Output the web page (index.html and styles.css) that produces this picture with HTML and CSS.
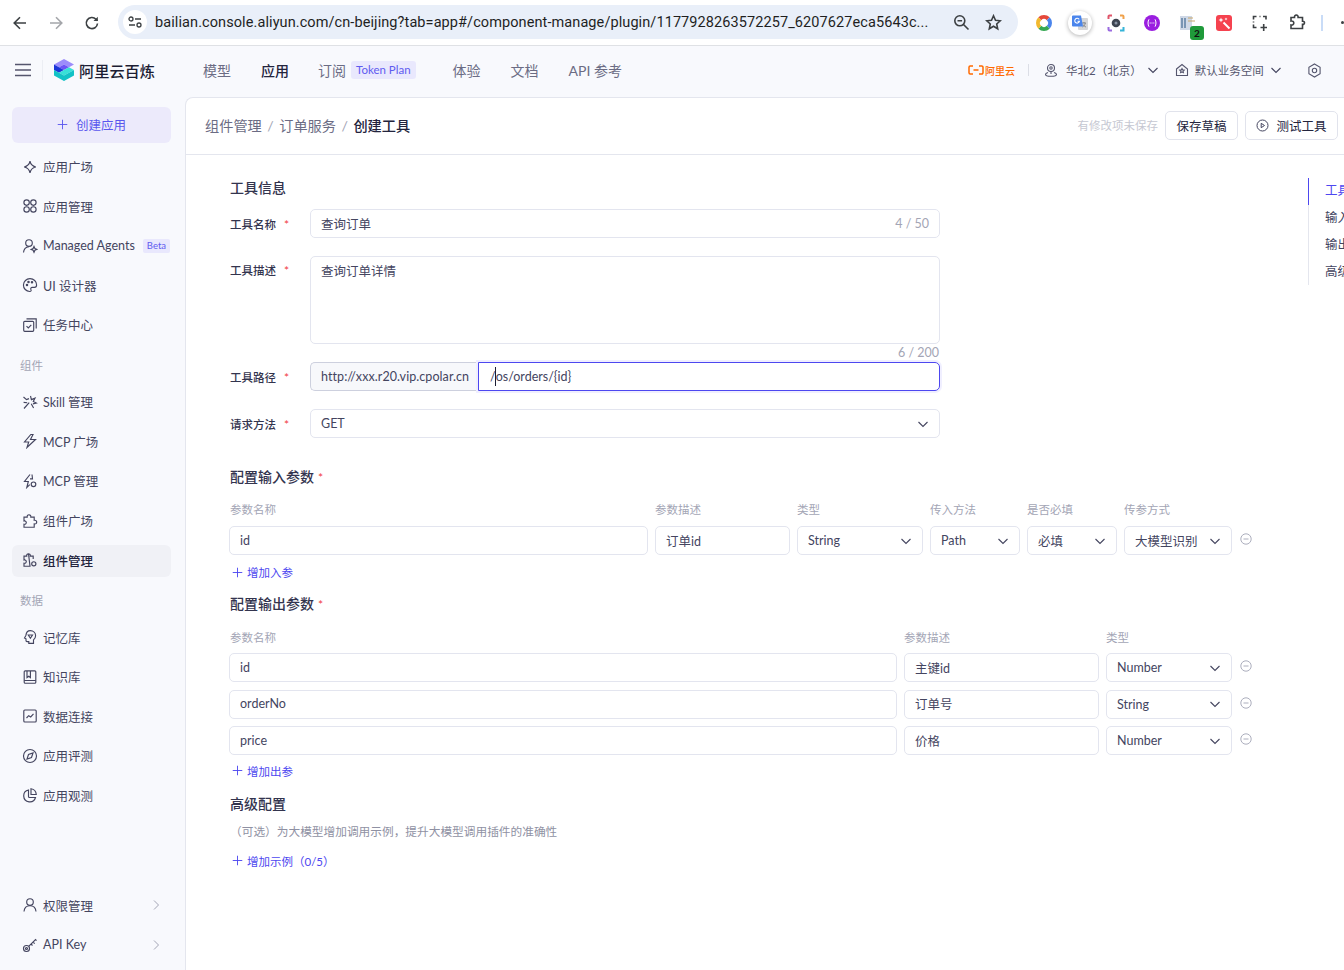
FILE: index.html

```html
<!DOCTYPE html>
<html lang="zh-CN">
<head>
  <meta charset="UTF-8">
  <meta name="viewport" content="width=device-width, initial-scale=1.0">
  <title>创建工具 - 阿里云百炼</title>
  <link rel="stylesheet" href="styles.css">
</head>
<body>
  <svg class="sprite" xmlns="http://www.w3.org/2000/svg">
    <symbol id="i-chev" viewBox="0 0 12 12"><path d="M1.5 4l4.5 4.5L10.5 4"/></symbol>
    <symbol id="i-right" viewBox="0 0 12 12"><path d="M4 1.5L8.5 6 4 10.500"/></symbol>
    <symbol id="i-minus" viewBox="0 0 12 12"><circle cx="6" cy="6" r="5.2"/><path d="M3.500 6h5"/></symbol>
    <symbol id="i-plus" viewBox="0 0 12 12"><path d="M6 .8v10.400M.8 6h10.400"/></symbol>
    <symbol id="i-spark" viewBox="0 0 16 16"><path d="M8 2.200c.6 3.200 2.400 5 5.800 5.800-3.400.8-5.200 2.600-5.800 5.800C7.400 10.600 5.600 8.800 2.200 8 5.600 7.200 7.400 5.400 8 2.200z"/></symbol>
    <symbol id="i-apps" viewBox="0 0 16 16"><circle cx="4.600" cy="4.600" r="2.700"/><circle cx="11.400" cy="4.600" r="2.700"/><circle cx="4.600" cy="11.400" r="2.700"/><circle cx="11.400" cy="11.400" r="2.700"/></symbol>
    <symbol id="i-agent" viewBox="0 0 16 16"><circle cx="7" cy="5" r="3.300"/><path d="M1.500 14.500c.3-3.300 2.300-5.500 5.500-5.800"/><path d="M12 8.500l.9 2 2 .9-2 .9-.9 2-.9-2-2-.9 2-.9z"/></symbol>
    <symbol id="i-palette" viewBox="0 0 16 16"><path d="M8 1.700a6.400 6.400 0 1 0-.3 12.800c1.500 0 1.700-1 1.200-2-.5-1.100.1-2.200 1.400-2.200h2.200c1.300 0 2.100-.9 2.100-2.300C14.600 4.300 11.700 1.700 8 1.700z"/><circle cx="5" cy="8" r=".7"/><circle cx="6.500" cy="5" r=".7"/><circle cx="10" cy="5.200" r=".7"/></symbol>
    <symbol id="i-task" viewBox="0 0 16 16"><rect x="1.700" y="4.300" width="10" height="10" rx="1"/><path d="M4.500 1.800h9.700v9.700"/><path d="M4.500 9.200l1.800 1.800 3-3.200"/></symbol>
    <symbol id="i-skill" viewBox="0 0 16 16"><path d="M8.500 2l.9 3.600 3.600-1.500-1.700 3.400 3 1.500-3.400.9"/><path d="M1.500 3l3 2.600L7 4.600M1.600 8.400l3.600.4M9.200 9.800l2.400 4.200M7.200 8.600L2 14.500"/></symbol>
    <symbol id="i-bolt" viewBox="0 0 16 16"><path d="M8.800 1.500L2.500 9h4.200L5 14.500 13.500 6.500H8.500l2.500-5z"/></symbol>
    <symbol id="i-boltgear" viewBox="0 0 16 16"><path d="M8 1.500L2.500 8.500h3.800L4.800 14.500l3-2.800M8 5.800h2.500L10 1.500"/><circle cx="11.500" cy="11.300" r="2.300"/></symbol>
    <symbol id="i-puzzle" viewBox="0 0 16 16"><path d="M7 1.800c1.300 0 2 .9 1.800 2.300h3.400v3.200c1.500-.3 2.500.5 2.500 1.800s-1 2.100-2.500 1.800v3.300H2v-3c1.500.3 2.400-.7 2.300-1.800C4.200 8.300 3.100 7.700 2 8V4.100h3.200C5 2.700 5.700 1.800 7 1.800z"/></symbol>
    <symbol id="i-puzzlegear" viewBox="0 0 16 16"><path d="M6.500 1.800c1.300 0 2 .9 1.800 2.300h2.900v3M8 14.200H2v-3c1.500.3 2.400-.7 2.300-1.800C4.200 8.300 3.100 7.700 2 8V4.100h2.700c-.2-1.400.5-2.300 1.800-2.300z"/><circle cx="11.800" cy="11.800" r="2.100"/></symbol>
    <symbol id="i-memory" viewBox="0 0 16 16"><path d="M8.300 1.600c3 0 5.300 2.200 5.300 5.100 0 1.900-1 3.200-2.100 4.200v3.500H6.800v-1.800H5c-.7 0-1-.4-1-1V9.800L2.500 9l1.400-2.600c.3-2.800 1.800-4.800 4.400-4.800z"/><path d="M6.300 6h4.200l-2.100 3.300z"/></symbol>
    <symbol id="i-book" viewBox="0 0 16 16"><rect x="2.200" y="1.800" width="11.600" height="12.400" rx="1"/><path d="M5 2v6.500l1.700-1.300 1.700 1.300V2M2.200 11.500h11.600"/></symbol>
    <symbol id="i-chart" viewBox="0 0 16 16"><rect x="1.800" y="2" width="12.400" height="12" rx="1"/><path d="M4.500 10l2.200-2.300 2 1.200 2.800-3"/></symbol>
    <symbol id="i-compass" viewBox="0 0 16 16"><circle cx="8" cy="8" r="6.500"/><path d="M11 5L9.500 9.500 5 11l1.500-4.500z"/></symbol>
    <symbol id="i-pie" viewBox="0 0 16 16"><path d="M6.500 3a6 6 0 1 0 7 7.500H7.500A1 1 0 0 1 6.500 9.500z"/><path d="M9 1.700c2.900.4 5 2.500 5.300 5.800H9z"/></symbol>
    <symbol id="i-user" viewBox="0 0 16 16"><circle cx="8" cy="5" r="3.300"/><path d="M2 14.500c.3-3.500 2.600-5.800 6-5.800s5.700 2.300 6 5.800"/></symbol>
    <symbol id="i-key" viewBox="0 0 16 16"><circle cx="4.500" cy="11.500" r="3"/><circle cx="4.500" cy="11.500" r="1"/><path d="M6.700 9.400L13.500 2.500l1 1.200M11 5l1.700 1.700M9 7l1.500 1.500"/></symbol>
  </svg>

  <header class="browser-bar">
    <button class="bar-btn">
      <svg width="16" height="16" viewBox="0 0 16 16"><path d="M14 8H2.500M8 2.200L2.200 8 8 13.800"/></svg>
    </button>
    <button class="bar-btn bar-btn-off">
      <svg width="16" height="16" viewBox="0 0 16 16"><path d="M2 8h11.500M8 2.200L13.800 8 8 13.800"/></svg>
    </button>
    <button class="bar-btn">
      <svg width="16" height="16" viewBox="0 0 16 16"><path d="M13.500 8.500a5.600 5.600 0 1 1-1.500-4.300l1.500 1.600"/><path d="M13.800 1.800v4.300H9.500" class="filled"/></svg>
    </button>
    <div class="omnibox">
      <span class="site-info">
        <svg width="14" height="12" viewBox="0 0 14 12"><circle cx="3" cy="3" r="2"/><path d="M7 3h6M1 9h6"/><circle cx="11" cy="9" r="2"/></svg>
      </span>
      <span class="url">bailian.console.aliyun.com/cn-beijing?tab=app#/component-manage/plugin/1177928263572257_6207627eca5643c...</span>
      <svg class="omni-icon" width="17" height="17" viewBox="0 0 17 17"><circle cx="6.800" cy="6.800" r="5"/><path d="M10.500 10.500L15.500 15.500M4.500 6.800h4.600"/></svg>
      <svg class="omni-icon" width="17" height="17" viewBox="0 0 17 17"><path d="M8.500 1.800l2 4.500 4.800.5-3.600 3.200 1 4.800-4.200-2.500-4.200 2.500 1-4.800L1.700 6.800l4.800-.5z"/></svg>
    </div>
    <div class="extensions">
      <span class="ext">
        <svg class="ring" width="18" height="18" viewBox="0 0 18 18">
          <path class="ring-r" d="M4.760 4.760A6 6 0 0 1 13.240 4.760"/>
          <path class="ring-b" d="M13.240 4.760A6 6 0 0 1 13.240 13.240"/>
          <path class="ring-g" d="M13.240 13.240A6 6 0 0 1 4.760 13.240"/>
          <path class="ring-y" d="M4.760 13.240A6 6 0 0 1 4.760 4.760"/>
        </svg>
      </span>
      <span class="ext">
        <span class="ext-halo">
          <svg width="18" height="18" viewBox="0 0 18 18"><rect x="7" y="4" width="10" height="12" rx="1" fill="#d5d6d8"/><path d="M11 9h4M13 8v1M11.500 13c1.800-1 2.500-2.300 2.800-4M12 10.500c.6 1 1.500 2 3 2.500" fill="none" stroke="#77797e" stroke-width=".8"/><path d="M1 2.500a1 1 0 0 1 1-1h8l2 11H2a1 1 0 0 1-1-1z" fill="#4a85ec"/><path d="M8.200 5.400A2.400 2.400 0 1 0 8.500 7.200H6.500" fill="none" stroke="#fff" stroke-width="1.100"/></svg>
        </span>
      </span>
      <span class="ext">
        <svg width="18" height="18" viewBox="0 0 18 18"><path d="M1.500 5V2.500a1 1 0 0 1 1-1H5" class="c-red"/><path d="M13 1.500h2.500a1 1 0 0 1 1 1V5" class="c-orange"/><path d="M1.500 13v2.500a1 1 0 0 0 1 1H5" class="c-purple"/><path d="M13 16.500h3.500V13" class="c-cyan"/><circle cx="9" cy="9" r="4.300" fill="#3d4450"/><circle cx="9" cy="9" r="1.500" fill="#8a93a3"/></svg>
      </span>
      <span class="ext">
        <svg width="16" height="16" viewBox="0 0 16 16"><circle cx="8" cy="8" r="8" fill="#9a1ee0"/><path d="M5 4.300C3.700 6.200 3.700 9.800 5 11.700M11 4.300c1.300 1.900 1.300 5.500 0 7.400" fill="none" stroke="#fff" stroke-width="1"/><path d="M5.700 8h1M7.500 8h1M9.300 8h1" stroke="#fff" stroke-width="1"/></svg>
      </span>
      <span class="ext">
        <svg width="18" height="18" viewBox="0 0 18 18"><rect x="1" y="2" width="12" height="14" fill="#cfd8e6"/><path d="M3 4v10M6 4v10" stroke="#55799e" stroke-width="1.400"/><path d="M9 4h5M9 7h7" stroke="#c9a86a" stroke-width="1.200"/></svg>
        <span class="ext-badge">2</span>
      </span>
      <span class="ext">
        <svg width="16" height="16" viewBox="0 0 16 16"><rect width="16" height="16" rx="3" fill="#f5424f"/><path d="M7.500 7.500l6 6" stroke="#fff" stroke-width="2"/><path d="M5 2.500l.7 1.800 1.800.7-1.800.7L5 7.500l-.7-1.800L2.500 5l1.800-.7zM10 2.500l.5 1 1 .5-1 .5-.5 1-.5-1-1-.5 1-.5z" fill="#fff"/></svg>
      </span>
      <span class="ext">
        <svg class="ext-line" width="16" height="16" viewBox="0 0 16 16"><path d="M4.500 1.500h-3v3M11 1.500h3v3M1.500 9.500v3h3M7.500 1.500h1M1.500 6.500v1M8.500 12.500h6.500M11.700 9v7"/></svg>
      </span>
      <span class="ext ext-wide">
        <svg class="ext-line" width="17" height="17" viewBox="0 0 17 17"><path d="M2 3.500h3.500c-.2-1.500.6-2.500 1.800-2.500s2 1 1.800 2.500h4.400v3.700c1.200-.1 2 .6 2 1.600s-.8 1.700-2 1.600v4.100H2v-3.500c1.700.3 2.800-.6 2.800-2s-1.100-2.300-2.800-2z"/></svg>
      </span>
      <span class="bar-divider"></span>
      <span class="bar-menu"></span>
    </div>
  </header>

  <nav class="top-nav">
    <button class="hamburger">
      <svg width="16" height="14" viewBox="0 0 16 14"><path d="M0 1.500h16M0 7h16M0 12.500h16"/></svg>
    </button>
    <span class="nav-sep"></span>
    <a class="logo">
      <svg width="22" height="22" viewBox="0 0 22 22">
        <path d="M11 0l10 5.500-5 2.800-5-2.800-5 2.800-5-2.800z" fill="#9c8cfb"/>
        <path d="M11 5.500l5 2.800-5 2.700-5-2.700z" fill="#6e54f5"/>
        <path d="M1 5.500l5 2.800 5 2.700-5 2.800-5-2.800z" fill="#1a35d8"/>
        <path d="M6 13.800l10-5.500 5 2.700-10 5.500z" fill="#38e0d8"/>
        <path d="M1 11l10 5.500L21 11v5.500L11 22 1 16.500z" fill="#12c2c6"/>
      </svg>
      <span class="logo-text">阿里云百炼</span>
    </a>
    <ul class="nav-links">
      <li>模型</li>
      <li class="nav-active">应用</li>
      <li class="nav-sub">订阅<span class="token-tag">Token Plan</span></li>
      <li>体验</li>
      <li>文档</li>
      <li>API 参考</li>
    </ul>
    <div class="nav-right">
      <span class="aliyun">
        <svg width="16" height="10" viewBox="0 0 16 10"><path d="M5 1H2.200A1.200 1.200 0 0 0 1 2.200v5.600A1.200 1.200 0 0 0 2.200 9H5M11 1h2.800A1.200 1.200 0 0 1 15 2.200v5.600A1.200 1.200 0 0 1 13.800 9H11M5.500 5h5"/></svg>
        阿里云
      </span>
      <span class="right-sep"></span>
      <span class="nav-drop region">
        <svg class="ico" width="14" height="14" viewBox="0 0 14 14"><circle cx="7" cy="5" r="3.500"/><circle cx="7" cy="5" r="1.200"/><path d="M4 9.500c-1.500.4-2.500 1.100-2.500 2 0 1 2.300 1.800 5.500 1.800s5.500-.8 5.500-1.800c0-.9-1-1.600-2.500-2M7 8.500v2.500"/></svg>
        <span>华北2（北京）</span>
        <svg class="chev" width="12" height="12"><use href="#i-chev"/></svg>
      </span>
      <span class="nav-drop workspace">
        <svg class="ico" width="14" height="14" viewBox="0 0 14 14"><path d="M1.500 6L7 1.500 12.500 6v6.500h-11z"/><path d="M7 5.500l.7 1.400 1.500.2-1.100 1 .3 1.500L7 9l-1.400.6.300-1.500-1.100-1 1.500-.2z"/></svg>
        <span>默认业务空间</span>
        <svg class="chev" width="12" height="12"><use href="#i-chev"/></svg>
      </span>
      <svg class="gear" width="15" height="15" viewBox="0 0 15 15"><path d="M7.500 1l5.600 3.200v6.600L7.500 14l-5.600-3.200V4.200z"/><circle cx="7.500" cy="7.500" r="2.200"/></svg>
    </div>
  </nav>

  <div class="layout">
    <aside class="sidebar">
      <button class="create-btn"><svg class="plus" width="11" height="11"><use href="#i-plus"/></svg>创建应用</button>
      <a class="side-item"><svg class="side-ico"><use href="#i-spark"/></svg>应用广场</a>
      <a class="side-item"><svg class="side-ico"><use href="#i-apps"/></svg>应用管理</a>
      <a class="side-item"><svg class="side-ico"><use href="#i-agent"/></svg>Managed Agents<span class="beta">Beta</span></a>
      <a class="side-item"><svg class="side-ico"><use href="#i-palette"/></svg>UI 设计器</a>
      <a class="side-item"><svg class="side-ico"><use href="#i-task"/></svg>任务中心</a>
      <div class="side-group">组件</div>
      <a class="side-item"><svg class="side-ico"><use href="#i-skill"/></svg>Skill 管理</a>
      <a class="side-item"><svg class="side-ico"><use href="#i-bolt"/></svg>MCP 广场</a>
      <a class="side-item"><svg class="side-ico"><use href="#i-boltgear"/></svg>MCP 管理</a>
      <a class="side-item"><svg class="side-ico"><use href="#i-puzzle"/></svg>组件广场</a>
      <a class="side-item side-active"><svg class="side-ico"><use href="#i-puzzlegear"/></svg>组件管理</a>
      <div class="side-group">数据</div>
      <a class="side-item"><svg class="side-ico"><use href="#i-memory"/></svg>记忆库</a>
      <a class="side-item"><svg class="side-ico"><use href="#i-book"/></svg>知识库</a>
      <a class="side-item"><svg class="side-ico"><use href="#i-chart"/></svg>数据连接</a>
      <a class="side-item"><svg class="side-ico"><use href="#i-compass"/></svg>应用评测</a>
      <a class="side-item"><svg class="side-ico"><use href="#i-pie"/></svg>应用观测</a>
      <a class="side-item side-bottom"><svg class="side-ico"><use href="#i-user"/></svg>权限管理<svg class="side-arrow" width="12" height="12"><use href="#i-right"/></svg></a>
      <a class="side-item"><svg class="side-ico"><use href="#i-key"/></svg>API Key<svg class="side-arrow" width="12" height="12"><use href="#i-right"/></svg></a>
    </aside>

    <main class="page">
      <div class="page-head">
        <div class="crumbs">
          <span>组件管理</span><i>/</i><span>订单服务</span><i>/</i><b>创建工具</b>
        </div>
        <div class="head-actions">
          <span class="unsaved">有修改项未保存</span>
          <button class="btn">保存草稿</button>
          <button class="btn">
            <svg width="13" height="13" viewBox="0 0 13 13"><circle cx="6.500" cy="6.500" r="5.500"/><path d="M5.200 4.300l3.300 2.200-3.300 2.200z"/></svg>
            测试工具
          </button>
        </div>
      </div>

      <div class="content">
        <div class="form-col">
          <h3 class="sec-title first">工具信息</h3>

          <div class="field">
            <label>工具名称<em>*</em></label>
            <div class="input grow">查询订单<span class="count">4 / 50</span></div>
          </div>
          <div class="field field-area">
            <label>工具描述<em>*</em></label>
            <div class="input grow area">查询订单详情</div>
          </div>
          <div class="area-count">6 / 200</div>
          <div class="field">
            <label>工具路径<em>*</em></label>
            <div class="path-group grow">
              <span class="path-host">http://xxx.r20.vip.cpolar.cn</span>
              <span class="path-input">/<span class="caret"></span>os/orders/{id}</span>
            </div>
          </div>
          <div class="field next">
            <label>请求方法<em>*</em></label>
            <div class="input grow select">GET<svg class="chev" width="12" height="12"><use href="#i-chev"/></svg></div>
          </div>

          <h3 class="sec-title input-sec">配置输入参数<em>*</em></h3>
          <div class="param-grid in-grid heads">
            <span>参数名称</span><span>参数描述</span><span>类型</span><span>传入方法</span><span>是否必填</span><span>传参方式</span>
          </div>
          <div class="param-grid in-grid">
            <div class="input">id</div>
            <div class="input">订单id</div>
            <div class="input select">String<svg class="chev" width="12" height="12"><use href="#i-chev"/></svg></div>
            <div class="input select">Path<svg class="chev" width="12" height="12"><use href="#i-chev"/></svg></div>
            <div class="input select">必填<svg class="chev" width="12" height="12"><use href="#i-chev"/></svg></div>
            <div class="input select">大模型识别<svg class="chev" width="12" height="12"><use href="#i-chev"/></svg></div>
            <svg class="minus" width="12" height="12"><use href="#i-minus"/></svg>
          </div>
          <a class="add-link"><svg class="plus" width="11" height="11"><use href="#i-plus"/></svg>增加入参</a>

          <h3 class="sec-title output-sec">配置输出参数<em>*</em></h3>
          <div class="param-grid out-grid heads">
            <span>参数名称</span><span>参数描述</span><span>类型</span>
          </div>
          <div class="param-grid out-grid">
            <div class="input">id</div>
            <div class="input">主键id</div>
            <div class="input select">Number<svg class="chev" width="12" height="12"><use href="#i-chev"/></svg></div>
            <svg class="minus" width="12" height="12"><use href="#i-minus"/></svg>
          </div>
          <div class="param-grid out-grid">
            <div class="input">orderNo</div>
            <div class="input">订单号</div>
            <div class="input select">String<svg class="chev" width="12" height="12"><use href="#i-chev"/></svg></div>
            <svg class="minus" width="12" height="12"><use href="#i-minus"/></svg>
          </div>
          <div class="param-grid out-grid">
            <div class="input">price</div>
            <div class="input">价格</div>
            <div class="input select">Number<svg class="chev" width="12" height="12"><use href="#i-chev"/></svg></div>
            <svg class="minus" width="12" height="12"><use href="#i-minus"/></svg>
          </div>
          <a class="add-link"><svg class="plus" width="11" height="11"><use href="#i-plus"/></svg>增加出参</a>

          <h3 class="sec-title adv-sec">高级配置</h3>
          <p class="adv-hint">（可选）为大模型增加调用示例，提升大模型调用插件的准确性</p>
          <a class="add-link add-sample"><svg class="plus" width="11" height="11"><use href="#i-plus"/></svg>增加示例（0/5）</a>
        </div>

        <ul class="anchor">
          <li class="anchor-on">工具信息</li>
          <li>输入参数</li>
          <li>输出参数</li>
          <li>高级配置</li>
        </ul>
      </div>
    </main>
  </div>
</body>
</html>
```

FILE: styles.css

```css
* {
  box-sizing: border-box;
}

html,
body {
  height: 100%;
}

body {
  margin: 0;
  display: flex;
  flex-direction: column;
  overflow: hidden;
  background: #f8f9fd;
  color: #44455f;
  font-family: Lato, "Noto Sans CJK SC", sans-serif;
  font-size: 12.5px;
}

.sprite {
  display: none;
}

button {
  font: inherit;
  color: inherit;
  background: none;
  border: none;
  padding: 0;
}

ul {
  list-style: none;
  margin: 0;
  padding: 0;
}

svg {
  flex-shrink: 0;
}

/* browser chrome */
.browser-bar {
  height: 46px;
  flex-shrink: 0;
  display: flex;
  align-items: center;
  padding-left: 2px;
  background: #fff;
  border-bottom: 1px solid #dfe1e5;
}

.bar-btn {
  width: 36px;
  height: 36px;
  display: flex;
  align-items: center;
  justify-content: center;
}

.bar-btn svg,
.omni-icon,
.site-info svg,
.ext-line {
  fill: none;
  stroke: #3c4043;
  stroke-width: 1.6;
}

.bar-btn .filled {
  fill: #3c4043;
  stroke: none;
}

.bar-btn-off svg {
  stroke: #a4a6aa;
}

.omnibox {
  width: 900px;
  height: 34px;
  margin-left: 8px;
  margin-top: -1px;
  display: flex;
  align-items: center;
  padding-left: 5px;
  border-radius: 17px;
  background: #e9eff9;
}

.site-info {
  width: 24px;
  height: 24px;
  display: flex;
  align-items: center;
  justify-content: center;
  border-radius: 50%;
  background: #fff;
  margin-right: 8px;
}

.site-info svg {
  stroke-width: 1.300;
}

.url {
  width: 783px;
  white-space: nowrap;
  color: #1f1f1f;
  font-family: Roboto, sans-serif;
  font-size: 14.5px;
  letter-spacing: 0.09px;
}

.omni-icon {
  margin-left: 15px;
}

.extensions {
  display: flex;
  align-items: center;
  margin-left: 8px;
}

.ext {
  width: 36px;
  height: 36px;
  position: relative;
  display: flex;
  align-items: center;
  justify-content: center;
}

.ext-wide {
  width: 38px;
}

.ring path {
  fill: none;
  stroke-width: 4;
}

.ring-r {
  stroke: #e5483a;
}

.ring-b {
  stroke: #4a85ec;
}

.ring-g {
  stroke: #35a853;
}

.ring-y {
  stroke: #f2b92e;
}

.ext-halo {
  width: 24px;
  height: 24px;
  display: flex;
  align-items: center;
  justify-content: center;
  border-radius: 50%;
  background: #fff;
  box-shadow: 0 1px 4px rgba(0, 0, 0, 0.3);
}

.ext svg path[class^="c-"] {
  fill: none;
  stroke-width: 2;
}

.c-red {
  stroke: #e0556a;
}

.c-orange {
  stroke: #f0a14a;
}

.c-purple {
  stroke: #9a6ae0;
}

.c-cyan {
  stroke: #35b4d8;
}

.ext-badge {
  position: absolute;
  right: 2px;
  bottom: 1px;
  width: 14px;
  height: 14px;
  border-radius: 3px;
  background: #1f9a3a;
  color: #111;
  font-size: 10px;
  font-weight: 700;
  line-height: 14px;
  text-align: center;
}

.bar-divider {
  width: 2px;
  height: 16px;
  margin-left: 5px;
  background: #c9dcf7;
}

.bar-menu {
  width: 3px;
  height: 3px;
  margin-left: 18px;
  border-radius: 50%;
  background: #3c4043;
}

/* product nav */
.top-nav {
  height: 51px;
  flex-shrink: 0;
  display: flex;
  align-items: center;
  padding: 0 0 3px 15px;
}

.hamburger {
  width: 16px;
  height: 14px;
  display: flex;
}

.hamburger svg {
  fill: none;
  stroke: #55566e;
  stroke-width: 1.300;
}

.nav-sep {
  width: 1px;
  height: 20px;
  margin-left: 11px;
  background: #eceef4;
}

.logo {
  display: flex;
  align-items: center;
  gap: 4px;
  margin-left: 10px;
  width: 150px;
}

.logo-text {
  color: #1c1d33;
  font-size: 15.2px;
  font-weight: 500;
}

.nav-links {
  display: flex;
  align-items: center;
  gap: 30px;
  font-size: 14px;
  color: #6b6c84;
}

.nav-active {
  color: #23243d;
  font-weight: 500;
}

.nav-sub {
  display: flex;
  align-items: center;
  gap: 5px;
  margin-left: -1px;
  margin-right: 7px;
}

.token-tag {
  height: 18px;
  padding: 0 5px;
  border-radius: 3px;
  background: #e9e8fd;
  color: #5f5bf0;
  font-size: 11.5px;
  line-height: 18px;
}

.nav-right {
  display: flex;
  align-items: center;
  margin-left: auto;
  width: 376px;
  color: #55566e;
  font-size: 11.5px;
}

.aliyun {
  display: flex;
  align-items: center;
  gap: 1px;
  width: 60px;
  color: #ff6a00;
  font-size: 10px;
  font-weight: 500;
}

.aliyun svg {
  fill: none;
  stroke: #ff6a00;
  stroke-width: 1.500;
}

.right-sep {
  width: 1px;
  height: 12px;
  background: #dcdee6;
}

.nav-drop {
  display: flex;
  align-items: center;
}

.region {
  margin-left: 15px;
  gap: 8px;
}

.region .chev {
  margin-left: -3px;
}

.workspace {
  margin-left: 16px;
  gap: 6px;
}

.nav-drop .ico,
.gear {
  fill: none;
  stroke: #55566e;
  stroke-width: 1.100;
}

.workspace .chev {
  margin-left: 0;
}

.chev {
  fill: none;
  stroke: #44455f;
  stroke-width: 1.100;
}

.gear {
  margin-left: 25px;
}

/* layout */
.layout {
  flex: 1;
  display: flex;
  min-height: 0;
}

.sidebar {
  width: 185px;
  flex-shrink: 0;
  display: flex;
  flex-direction: column;
  padding: 10px 14px 1px 12px;
}

.create-btn {
  height: 36px;
  flex-shrink: 0;
  display: flex;
  align-items: center;
  justify-content: center;
  gap: 8px;
  margin-bottom: 8px;
  padding-bottom: 1px;
  border-radius: 6px;
  background: #eceafb;
  color: #5a57ee;
}

.plus {
  fill: none;
  stroke: currentColor;
  stroke-width: 1;
}

.side-item {
  height: 32px;
  flex-shrink: 0;
  margin-bottom: 7.600px;
  display: flex;
  align-items: center;
  gap: 5px;
  padding-left: 10px;
  padding-bottom: 1px;
  border-radius: 6px;
  white-space: nowrap;
}

.side-ico {
  width: 16px;
  height: 16px;
  fill: none;
  stroke: #44455f;
  stroke-width: 1.150;
}

.side-group {
  height: 30px;
  flex-shrink: 0;
  margin-bottom: 7.300px;
  padding-left: 8px;
  color: #a3a5b5;
  font-size: 11.500px;
  line-height: 33px;
}

.side-active {
  background: #f0f1f6;
  color: #23243d;
  font-weight: 500;
}

.side-bottom {
  margin-top: auto;
}

.beta {
  height: 14px;
  margin-left: 3px;
  padding: 0 4px;
  border-radius: 2px;
  background: #e9e8fd;
  color: #5f5bf0;
  font-size: 9.500px;
  line-height: 14px;
}

.side-arrow {
  margin-left: auto;
  margin-right: 9px;
  fill: none;
  stroke: #a3a5b5;
}

/* main panel */
.page {
  flex: 1;
  min-width: 0;
  overflow: hidden;
  background: #fff;
  border-top: 1px solid #e4e6ee;
  border-left: 1px solid #e4e6ee;
  border-top-left-radius: 8px;
}

.page-head {
  height: 57px;
  display: flex;
  align-items: center;
  justify-content: space-between;
  padding: 0 6px 2px 19px;
  border-bottom: 1px solid #e4e6ee;
}

.crumbs {
  display: flex;
  align-items: center;
  font-size: 14.200px;
  color: #6b6c84;
}

.crumbs i {
  margin: 0 5.500px;
  font-style: normal;
  color: #a3a5b5;
}

.crumbs b {
  color: #23243d;
  font-weight: 500;
}

.head-actions {
  display: flex;
  align-items: center;
  gap: 7px;
}

.unsaved {
  color: #c6c8d2;
  font-size: 11.500px;
}

.btn {
  height: 29px;
  display: flex;
  align-items: center;
  gap: 7px;
  padding: 0 10.500px;
  border: 1px solid #e1e3ec;
  border-radius: 5px;
  background: #fff;
  color: #23243d;
}

.btn svg {
  fill: none;
  stroke: #44455f;
}

.content {
  display: flex;
  padding-left: 44px;
}

.form-col {
  width: 1078px;
  flex-shrink: 0;
}

.sec-title {
  margin: 0;
  height: 20px;
  color: #33344e;
  font-size: 14px;
  font-weight: 500;
  line-height: 20px;
}

.sec-title em {
  margin-left: 4px;
  color: #f2444b;
  font-size: 12px;
  font-style: normal;
}

.sec-title.first {
  margin-top: 23px;
  margin-bottom: 11px;
}

.input-sec {
  margin-top: 29px;
  margin-bottom: 14px;
}

.output-sec {
  margin-top: 14px;
  margin-bottom: 15px;
}

.adv-sec {
  margin-top: 15px;
  margin-bottom: 9px;
}

.field {
  width: 710px;
  display: flex;
  align-items: center;
}

.field-area {
  align-items: flex-start;
  margin-top: 18px;
}

.field.next {
  margin-top: 18px;
}

.field label {
  width: 80px;
  flex-shrink: 0;
  color: #33344e;
  font-size: 11.500px;
  font-weight: 500;
}

.field label em {
  margin-left: 8px;
  color: #f2444b;
  font-size: 12px;
  font-style: normal;
}

.field-area label {
  padding-top: 6px;
}

.grow {
  flex: 1;
}

.input {
  height: 29px;
  display: flex;
  align-items: center;
  padding: 0 10px;
  border: 1px solid #e3e5ef;
  border-radius: 5px;
  background: #fff;
  color: #44455f;
  white-space: nowrap;
}

.count {
  margin-left: auto;
  color: #a3a5b5;
}

.area {
  height: 88px;
  align-items: flex-start;
  padding-top: 3.500px;
}

.area-count {
  width: 710px;
  height: 18px;
  padding-right: 1px;
  color: #a3a5b5;
  line-height: 17px;
  text-align: right;
}

.path-group {
  height: 29px;
  display: flex;
}

.path-host {
  width: 168px;
  flex-shrink: 0;
  display: flex;
  align-items: center;
  padding-left: 10px;
  border: 1px solid #cdd0de;
  border-right: none;
  border-radius: 5px 0 0 5px;
  background: #f7f8fb;
  letter-spacing: 0.07px;
  white-space: nowrap;
}

.path-input {
  flex: 1;
  display: flex;
  align-items: center;
  padding-left: 11px;
  border: 1px solid #4d47f0;
  border-radius: 0 5px 5px 0;
  box-shadow: 0 0 0 2px #f0efff;
}

.caret {
  width: 1px;
  height: 19px;
  margin-left: -1px;
  background: #1c1d33;
}

.select {
  justify-content: space-between;
}

.param-grid {
  display: grid;
  column-gap: 7px;
  align-items: center;
  margin-left: -1px;
}

.param-grid .input:not(.select) {
  padding-bottom: 1px;
}

.in-grid {
  grid-template-columns: 419px 135px 126px 90px 90px 108px 12px;
}

.out-grid {
  grid-template-columns: 668px 195px 126px 12px;
  margin-bottom: 7.500px;
}

.heads {
  margin-bottom: 9px;
  height: 16px;
  color: #a3a5b5;
  font-size: 11.500px;
  line-height: 18px;
}

.heads span:first-child {
  padding-left: 1px;
}

.out-grid.heads {
  margin-bottom: 8px;
}

.minus {
  margin-left: 1px;
  margin-top: -3px;
  fill: none;
  stroke: #a3a5b5;
  stroke-width: 0.900;
}

.add-link {
  height: 16px;
  display: flex;
  align-items: center;
  gap: 4px;
  margin-top: 9px;
  margin-left: 2px;
  color: #4d47f0;
  font-size: 11.500px;
}

.out-grid + .add-link {
  margin-top: 3.500px;
}

.adv-hint {
  margin: 0;
  height: 16px;
  color: #8f91a3;
  font-size: 11.700px;
  line-height: 16px;
}

.add-link.add-sample {
  margin-top: 14px;
}

.anchor {
  flex-shrink: 0;
  margin-top: 23px;
  width: 60px;
  height: 107px;
  border-left: 1px solid #e4e6ee;
  color: #44455f;
  white-space: nowrap;
}

.anchor li {
  height: 27px;
  padding-left: 16px;
  line-height: 26px;
}

.anchor-on {
  margin-left: -1px;
  border-left: 1px solid #4d47f0;
  color: #4d47f0;
}
```
